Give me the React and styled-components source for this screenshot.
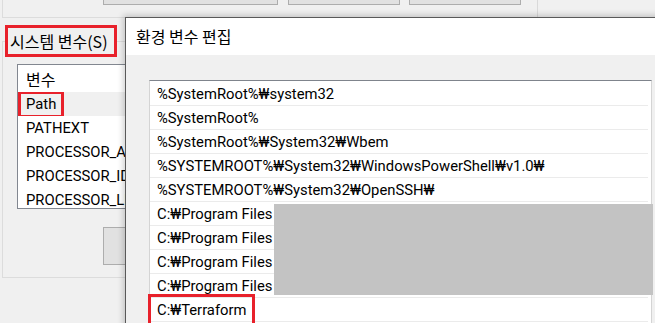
import React from "react";
import styled, { createGlobalStyle } from "styled-components";

const Global = createGlobalStyle`
  html, body { margin: 0; padding: 0; background: #f0f0f0; }
  body { font-family: Roboto, "Noto Sans CJK KR", sans-serif; color: #000; }
  * { box-sizing: border-box; }
`;

const Screen = styled.div`
  position: relative;
  width: 655px;
  height: 323px;
  overflow: hidden;
  background: #f0f0f0;
  font-size: 14.8px;
`;

const BackWindow = styled.div`
  display: flex;
  flex-direction: column;
  width: 655px;
`;

const TopArea = styled.div`
  height: 18px;
  margin-left: 2px;
  border-left: 1px solid #dcdcdc;
  border-bottom: 1px solid #dcdcdc;
  display: flex;
  align-items: flex-start;
  padding-left: 100px;
`;

const TopButton = styled.div`
  width: ${(p) => p.$w}px;
  margin-right: ${(p) => p.$gap}px;
  height: 5px;
  background: #e1e1e1;
  border: 1px solid #adadad;
  border-top: none;
`;

const VLine = styled.div`
  width: 1px;
  height: 17px;
  margin-left: 16px;
  background: #d9d9d9;
`;

const GroupBox = styled.fieldset`
  margin: 7px 0 0 2px;
  padding: 0 0 12px 0;
  border: 1px solid #dcdcdc;
  border-right: none;
  min-inline-size: 0;
`;

const Legend = styled.legend`
  margin-left: 2px;
  height: 32px;
  padding: 0 6px 1px 2px;
  border: 3px solid #e8212b;
  display: flex;
  align-items: center;
  font-family: "Noto Sans CJK KR", sans-serif;
  font-size: 16px;
  line-height: 1;
`;

const VarList = styled.div`
  margin: 7px 0 0 14px;
  width: 109px;
  height: 145px;
  border: 1px solid #828790;
  background: #fff;
  overflow: hidden;
`;

const HeaderRow = styled.div`
  height: 27px;
  display: flex;
  align-items: center;
  padding-left: 8px;
  font-family: "Noto Sans CJK KR", sans-serif;
  font-size: 16px;
  line-height: 1;
`;

const VarRow = styled.div`
  height: 24px;
  display: flex;
  align-items: center;
  padding-left: 8px;
  white-space: nowrap;
  overflow: hidden;
  background: ${(p) => (p.$selected ? "#f0f0f0" : "#fff")};
`;

const Mark = styled.span`
  display: inline-flex;
  align-items: center;
  height: ${(p) => p.$h}px;
  margin-left: ${(p) => p.$ml}px;
  padding: 0 ${(p) => p.$pr}px 0 ${(p) => p.$pl}px;
  border: 3px solid #e8212b;
  flex-shrink: 0;
`;

const SmallButton = styled.div`
  margin: 18px 0 0 100px;
  width: 120px;
  height: 38px;
  background: #e1e1e1;
  border: 1px solid #adadad;
`;

const Dialog = styled.div`
  position: absolute;
  left: 125px;
  top: 17px;
  width: 560px;
  height: 330px;
  border: 1px solid #595959;
  background: #f0f0f0;
  box-shadow: -2px -2px 6px rgba(0, 0, 0, 0.18);
  display: flex;
  flex-direction: column;
`;

const TitleBar = styled.div`
  height: 37px;
  background: #fff;
  display: flex;
  align-items: center;
  padding: 0 0 2px 10px;
  font-family: "Noto Sans CJK KR", sans-serif;
  font-size: 16px;
  line-height: 1;
`;

const DialogBody = styled.div`
  padding: 25px 0 0 23px;
`;

const PathList = styled.div`
  position: relative;
  width: 503px;
  height: 260px;
  background: #fff;
  border-top: 1px solid #7f848c;
  border-left: 1px solid #d4d4d4;
  border-right: 1px solid #d4d4d4;
  padding-top: 1px;
`;

const PathRow = styled.div`
  height: 24px;
  display: flex;
  align-items: center;
  padding-left: 7px;
  margin-right: 3px;
  border-bottom: 1px solid #ebebeb;
  white-space: nowrap;
`;

const Redaction = styled.div`
  position: absolute;
  left: 124px;
  top: 123px;
  width: 379px;
  height: 91px;
  background: #c3c3c3;
`;

const vars = ["PATHEXT", "PROCESSOR_ARCHITECTURE", "PROCESSOR_IDENTIFIER", "PROCESSOR_LEVEL"];

const paths = [
  "%SystemRoot%₩system32",
  "%SystemRoot%",
  "%SystemRoot%₩System32₩Wbem",
  "%SYSTEMROOT%₩System32₩WindowsPowerShell₩v1.0₩",
  "%SYSTEMROOT%₩System32₩OpenSSH₩",
  "C:₩Program Files",
  "C:₩Program Files",
  "C:₩Program Files",
  "C:₩Program Files",
];

export default function App() {
  return (
    <Screen>
      <Global />
      <BackWindow>
        <TopArea>
          <TopButton $w={175} $gap={10} />
          <TopButton $w={112} $gap={9} />
          <TopButton $w={112} $gap={0} />
          <VLine />
        </TopArea>
        <GroupBox>
          <Legend>시스템 변수(S)</Legend>
          <VarList>
            <HeaderRow>변수</HeaderRow>
            <VarRow $selected>
              <Mark $h={27} $ml={-8} $pl={5} $pr={5}>Path</Mark>
            </VarRow>
            {vars.map((v) => (
              <VarRow key={v}>{v}</VarRow>
            ))}
          </VarList>
          <SmallButton />
        </GroupBox>
      </BackWindow>
      <Dialog>
        <TitleBar>환경 변수 편집</TitleBar>
        <DialogBody>
          <PathList>
            {paths.map((p, i) => (
              <PathRow key={i}>{p}</PathRow>
            ))}
            <PathRow>
              <Mark $h={32} $ml={-9} $pl={6} $pr={6}>C:₩Terraform</Mark>
            </PathRow>
            <Redaction />
          </PathList>
        </DialogBody>
      </Dialog>
    </Screen>
  );
}
